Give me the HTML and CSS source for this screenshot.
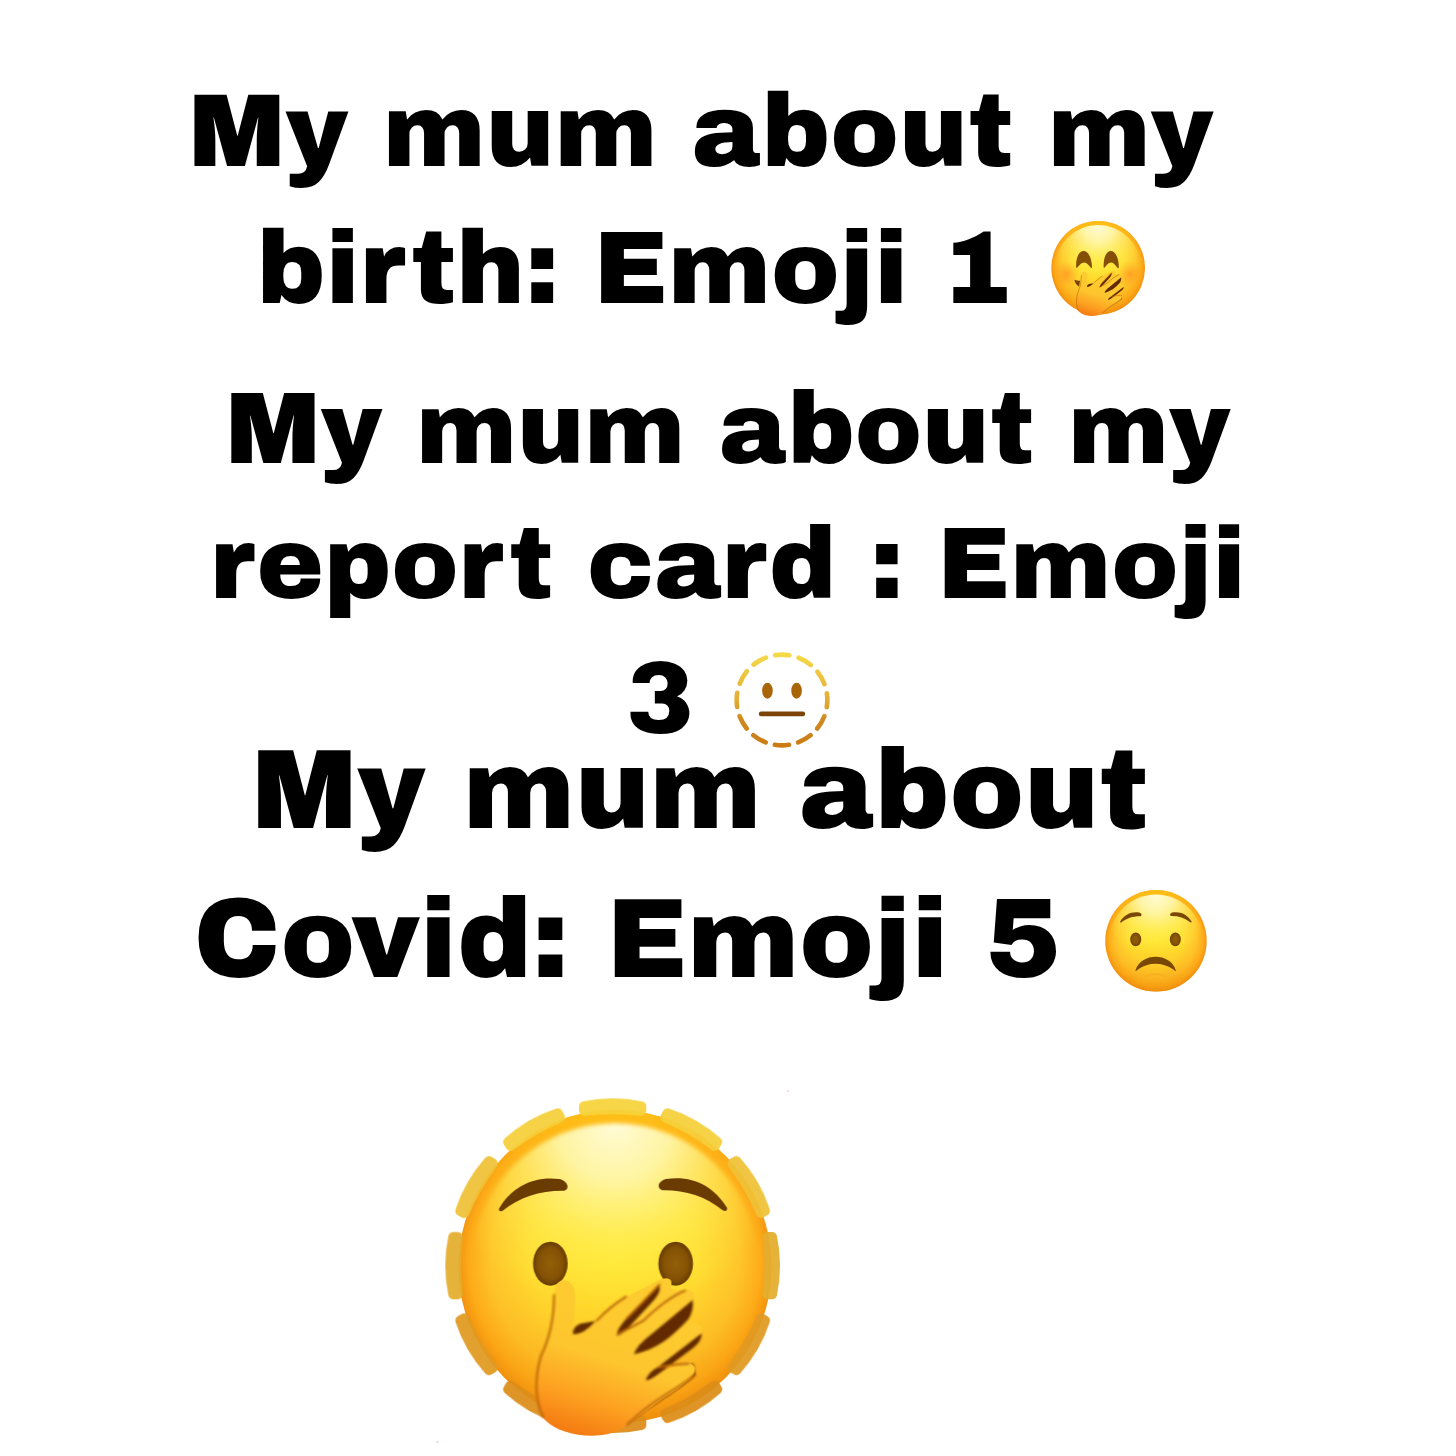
FILE: index.html
```
<!DOCTYPE html>
<html lang="en">
<head>
<meta charset="utf-8">
<meta name="viewport" content="width=device-width, initial-scale=1">
<title>My mum about</title>
<link rel="stylesheet" href="styles.css">
</head>
<body>
<svg class="defs" aria-hidden="true">
  <defs>
    <radialGradient id="face" cx=".5" cy=".48" r=".53">
      <stop offset="0" stop-color="#ffe52e"/><stop offset=".5" stop-color="#ffdc31"/><stop offset=".75" stop-color="#fec52b"/><stop offset=".88" stop-color="#fdab18"/><stop offset="1" stop-color="#ea7d0a"/>
    </radialGradient>
    <linearGradient id="low" x1="0" y1="0" x2="0" y2="1">
      <stop offset="0" stop-color="#ffc515" stop-opacity=".8"/><stop offset=".3" stop-color="#ffac14" stop-opacity="0"/><stop offset=".5" stop-color="#ffac14" stop-opacity="0"/><stop offset="1" stop-color="#f0940e" stop-opacity=".6"/>
    </linearGradient>
    <radialGradient id="shine" cx=".5" cy="0" r=".66">
      <stop offset="0" stop-color="#fffcd8"/><stop offset=".3" stop-color="#fff9b0" stop-opacity=".9"/><stop offset=".65" stop-color="#fff360" stop-opacity=".5"/><stop offset="1" stop-color="#ffec3a" stop-opacity="0"/>
    </radialGradient>
    <radialGradient id="eye"><stop offset="0" stop-color="#916008"/><stop offset=".7" stop-color="#855205"/><stop offset="1" stop-color="#673d03"/></radialGradient>
    <linearGradient id="skin" gradientUnits="userSpaceOnUse" x1="600" y1="700" x2="480" y2="1070">
      <stop offset="0" stop-color="#fdcb2f"/><stop offset=".4" stop-color="#fdc52e"/><stop offset=".75" stop-color="#fd9f20"/><stop offset="1" stop-color="#f47d13"/>
    </linearGradient>
    <radialGradient id="blush"><stop offset="0" stop-color="#ff8620" stop-opacity=".6"/><stop offset="1" stop-color="#ff9420" stop-opacity="0"/></radialGradient>
    <linearGradient id="ring" gradientUnits="userSpaceOnUse" x1="0" y1="25" x2="0" y2="315">
      <stop offset="0" stop-color="#f5dc48"/><stop offset=".5" stop-color="#e2ad35"/><stop offset=".7" stop-color="#cf8a21"/><stop offset="1" stop-color="#cb7a14"/>
    </linearGradient>
    <filter id="soft" x="-10%" y="-10%" width="120%" height="120%"><feGaussianBlur stdDeviation="6"/></filter>
    <filter id="edge" x="-10%" y="-10%" width="120%" height="120%"><feGaussianBlur stdDeviation="3"/></filter>
    <g id="head">
      <circle cx="555" cy="560" r="470" fill="url(#face)"/>
      <circle cx="555" cy="560" r="470" fill="url(#low)"/>
      <circle cx="555" cy="560" r="430" fill="url(#shine)" filter="url(#soft)"/>
    </g>
    <g id="worry">
      <path d="M207 386C245 318 315 287 388 297C414 303 420 327 403 332C330 331 270 350 218 392Q205 397 207 386Z"/>
      <path d="M891 383C850 316 785 285 708 297C683 304 679 326 697 331C765 330 825 348 878 391Q893 397 891 383Z"/>
    </g>
    <g id="eyes" fill="url(#eye)"><ellipse cx="361" cy="551" rx="52" ry="66"/><ellipse cx="737" cy="551" rx="52" ry="66"/></g>
    <g id="hand">
      <path d="M580 1038C670 975 755 925 797 885L790 850L650 900Z" fill="#8a4205" filter="url(#edge)"/>
      <path d="M373 640C373 590 428 585 435 640C439 690 425 725 428 762C470 760 500 722 525 697Q560 660 600 645L682 602Q735 580 722 625L738 632C795 616 805 650 780 678L612 825L650 815L770 735C815 715 830 755 800 783L648 900L740 855C795 835 810 870 777 900Q740 932 700 955L590 1035C545 1080 405 1080 345 1020C305 965 310 885 332 825C365 775 365 700 373 640Z" fill="url(#skin)"/>
      <g filter="url(#edge)">
        <path d="M560 766Q562 745 590 715L688 614Q695 632 672 660L600 738Q570 770 560 766ZM612 823Q620 795 665 762L788 660Q792 690 775 718C725 772 680 808 612 823ZM648 900Q653 878 685 860L815 760Q815 785 790 803L690 878Q655 904 648 900ZM429 762Q427 741 450 731L497 723Q455 768 429 762Z" fill="#632c00"/>
        <path d="M372 645Q372 750 332 830Q303 935 340 1012M500 722Q540 680 588 650M590 715Q640 665 688 614M565 762L640 722Q710 655 765 632M685 862Q740 850 775 852M592 1033Q645 982 710 942Q760 912 793 884" fill="none" stroke="#b76408" stroke-width="6" stroke-linecap="round"/>
      </g>
    </g>
    <path id="dash" d="M463 80Q548 62 633 80V92Q548 80 463 92Z" stroke-width="32" stroke-linejoin="round"/>
  </defs>
</svg>
<main class="page">
  <p class="caption birth">
    <span class="line">My mum about my</span>
    <span class="line">birth: Emoji 1
      <svg class="emoji covered" viewBox="43 32 282 292" role="img" aria-label="Face with hand over mouth">
        <use href="#head" transform="translate(18 5) scale(.3)"/>
        <circle cx="88" cy="192" r="40" fill="url(#blush)"/><circle cx="280" cy="192" r="40" fill="url(#blush)"/>
        <path d="M118 171C116 106 164 106 166 171Q165 178 160 170Q142 145 125 168Q119 176 118 171ZM201 171C199 106 245 106 247 171Q245 178 240 170Q223 145 207 168Q202 176 201 171Z" fill="#855006"/>
        <path d="M113 209Q123 213 130 212L127 230Q115 222 113 209Z" fill="#7a4200"/>
        <use href="#hand" transform="translate(27 11) scale(.288)"/>
      </svg>
    </span>
  </p>
  <p class="caption report">
    <span class="line">My mum about my</span>
    <span class="line">report card : Emoji</span>
    <span class="line">3
      <svg class="emoji dotted" viewBox="33 25 290 290" role="img" aria-label="Dotted line face">
        <circle cx="178" cy="170" r="137" fill="none" stroke="url(#ring)" stroke-width="14" stroke-linecap="round" pathLength="360" stroke-dasharray="18 12" stroke-dashoffset="9"/>
        <ellipse cx="134" cy="142" rx="16" ry="24" fill="#a96508"/><ellipse cx="222" cy="142" rx="16" ry="24" fill="#a96508"/>
        <path d="M115 212H241" stroke="#7c4304" stroke-width="14" stroke-linecap="round"/>
      </svg>
    </span>
  </p>
  <p class="caption covid">
    <span class="line">My mum about</span>
    <span class="line">Covid: Emoji 5
      <svg class="emoji worried" viewBox="29 23 308 308" role="img" aria-label="Worried face">
        <use href="#head" transform="translate(2 -6) scale(.326)"/>
        <use href="#worry" transform="translate(9 -3) scale(.316)" fill="#794804"/>
        <use href="#eyes" transform="translate(7 -3) scale(.318)"/>
        <path d="M121 266C137 211 227 211 243 266Q242 270 237 264Q181 228 127 264Q121 270 121 266Z" fill="#794804"/>
        <path d="M150 284Q181 270 214 284" fill="none" stroke="#f8a91c" stroke-width="5" stroke-linecap="round" opacity=".6"/>
      </svg>
    </span>
  </p>
  <svg class="mix" viewBox="0 0 1110 1110" role="img" aria-label="Combined emoji">
    <use href="#head"/>
    <g opacity=".94">
      <use href="#dash" fill="#f6d33b" stroke="#f6d33b"/>
      <use href="#dash" transform="rotate(30 548 557)" fill="#f6cf3b" stroke="#f6cf3b"/>
      <use href="#dash" transform="rotate(-30 548 557)" fill="#f6cf3b" stroke="#f6cf3b"/>
      <use href="#dash" transform="rotate(60 548 557)" fill="#efc237" stroke="#efc237"/>
      <use href="#dash" transform="rotate(-60 548 557)" fill="#efc237" stroke="#efc237"/>
      <use href="#dash" transform="rotate(90 548 557)" fill="#e4ae2d" stroke="#e4ae2d"/>
      <use href="#dash" transform="rotate(-90 548 557)" fill="#e4ae2d" stroke="#e4ae2d"/>
      <use href="#dash" transform="rotate(120 548 557)" fill="#e09a22" stroke="#e09a22"/>
      <use href="#dash" transform="rotate(-120 548 557)" fill="#e09a22" stroke="#e09a22"/>
      <use href="#dash" transform="rotate(150 548 557)" fill="#dc8d18" stroke="#dc8d18"/>
      <use href="#dash" transform="rotate(-150 548 557)" fill="#dc8d18" stroke="#dc8d18"/>
      <use href="#dash" transform="rotate(180 548 557)" fill="#dc8d18" stroke="#dc8d18"/>
    </g>
    <use href="#worry" fill="#6b3c02"/>
    <use href="#eyes"/>
    <use href="#hand"/>
    <circle cx="1074" cy="33" r="3" fill="#f3c9cc"/><circle cx="22" cy="1086" r="3" fill="#f3c9cc"/>
  </svg>
</main>
</body>
</html>
```
FILE: styles.css
```
* {
  box-sizing: border-box;
}

body {
  margin: 0;
  background: #fff;
  color: #000;
  font-family: "Archivo Black", "DejaVu Sans", sans-serif;
  font-weight: 400;
}

.defs {
  position: absolute;
  width: 0;
  height: 0;
}

.page {
  display: flex;
  flex-direction: column;
  padding-top: 64px;
}

.caption {
  margin: 0;
}

.line {
  display: flex;
  justify-content: center;
  align-items: center;
  gap: 40px;
  white-space: nowrap;
}

.birth {
  padding-right: 54px;
  font-size: 103px;
  line-height: 137px;
}

.report {
  margin-top: 24px;
  font-size: 101px;
  line-height: 135px;
}

.covid {
  margin-top: -50px;
  padding-right: 56px;
  font-size: 112px;
  line-height: 149px;
}

.covid .line {
  gap: 44px;
}

.emoji {
  flex: none;
}

.covered {
  width: 94px;
  height: 97px;
}

.dotted {
  width: 96px;
  height: 96px;
}

.worried {
  width: 102px;
  height: 102px;
}

.mix {
  width: 370px;
  height: 370px;
  margin: 65px auto 0;
  transform: translateX(-113px);
}
```
